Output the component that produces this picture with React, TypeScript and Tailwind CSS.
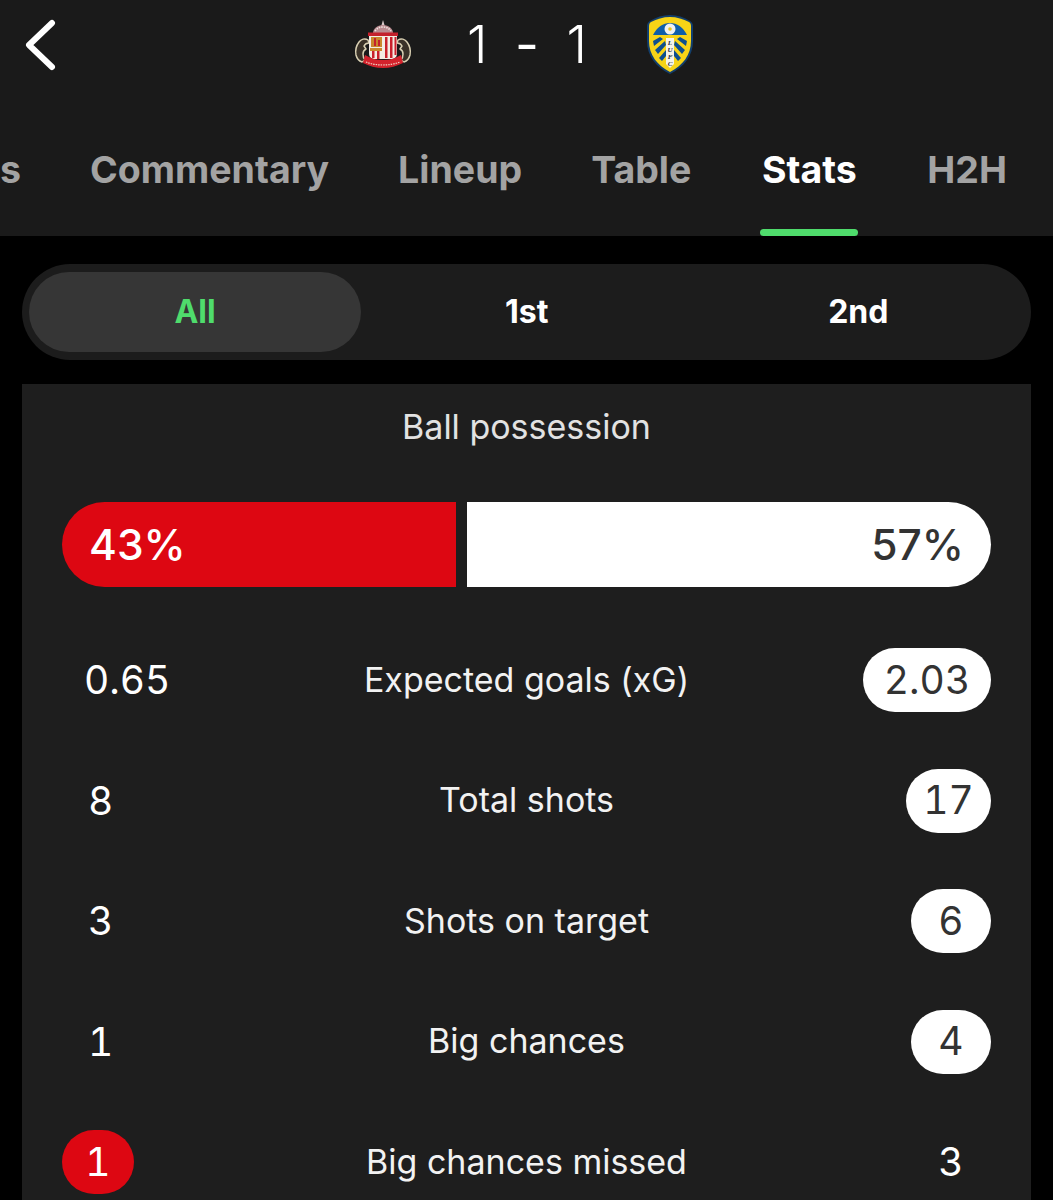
const tabs = ["Events", "Commentary", "Lineup", "Table", "Stats", "H2H"];

const rows = [
  { left: "0.65", label: "Expected goals (xG)", right: "2.03", win: "right", pad: "w-[128px]" },
  { left: "8", label: "Total shots", right: "17", win: "right", pad: "w-[85px]" },
  { left: "3", label: "Shots on target", right: "6", win: "right", pad: "w-[80px]" },
  { left: "1", label: "Big chances", right: "4", win: "right", pad: "w-[80px]" },
  { left: "1", label: "Big chances missed", right: "3", win: "left", pad: "w-[72px]" },
];

function SunderlandCrest() {
  return (
    <svg width="60" height="54" viewBox="0 0 60 54" className="shrink-0">
      <path d="M30 2l1.800 6h-3.600z" fill="#d9c9c9" />
      <path d="M20 15c0-4 4-8 10-8s10 4 10 8z" fill="#b98a8f" />
      <path d="M22 13c2-3 5-4 8-4s6 1 8 4" fill="none" stroke="#efe3e0" strokeWidth="1.600" strokeDasharray="1.500 1" />
      <path d="M15 14.500h30v3.500H15z" fill="#c4202b" />
      <path d="M15 22c-3-2-7-1-9 2-3 4-4 8-3 13 1 4 3 6 6 7l3-2c-1-1-2-3-2-6 0-2 1-4 3-5l-2-3c1-2 3-3 5-3z" fill="#3a3228" stroke="#d8cfb2" strokeWidth="1.500" strokeLinejoin="round" />
      <path d="M45 22c3-2 7-1 9 2 3 4 4 8 3 13-1 4-3 6-6 7l-3-2c1-1 2-3 2-6 0-2-1-4-3-5l2-3c-1-2-3-3-5-3z" fill="#3a3228" stroke="#d8cfb2" strokeWidth="1.500" strokeLinejoin="round" />
      <path d="M16 18h28v17c0 4-2 6-6 6H22c-4 0-6-2-6-6z" fill="#f3ebe2" />
      <path d="M18 19h11v10H18z" fill="#c9872c" />
      <path d="M21 20h2v8h-2zM25 22h2v6h-2z" fill="#c4202b" />
      <path d="M32 19h2.500v21H32zM37 19h2.500v21H37zM41.500 19h2v18h-2z" fill="#c9202b" />
      <path d="M17 30h12v3H17z" fill="#c9872c" />
      <path d="M19 33h2.500v7H19zM24 33h2.500v8H24z" fill="#c9202b" />
      <path d="M12 37c5 3 11 5 18 5s13-2 18-5l2 8c-6 3-13 5-20 5s-14-2-20-5z" fill="#d3222c" />
      <path d="M13 44c5 2 11 3 17 3s12-1 17-3" fill="none" stroke="#f0d4c4" strokeWidth="1.200" strokeDasharray="1.500 1" />
    </svg>
  );
}

function LeedsCrest() {
  return (
    <svg width="48" height="60" viewBox="0 0 48 60" className="shrink-0">
      <path d="M24 0c7 0 14 2 20 6 2 1 3 3 3 5v15c0 15-9 26-23 33C10 52 1 41 1 26V11c0-2 1-4 3-5C10 2 17 0 24 0z" fill="#123f6d" />
      <path d="M24 2c7 0 13 2 19 5 1.500 1 2 2.500 2 4v15c0 14-8 24-21 31C11 50 3 40 3 26V11c0-1.500.5-3 2-4C11 4 17 2 24 2z" fill="#f7d417" />
      <path d="M24 8c7 0 13 4 17 12H7c4-8 10-12 17-12z" fill="#0e5ea8" />
      <circle cx="24" cy="14" r="5.500" fill="#eef1f3" />
      <circle cx="24" cy="14" r="1.800" fill="#e8c520" />
      <path d="M7 26l7-4 3 2-9 7zM9 35l10-9 1 4-8 9zM13 43l7-8v6l-4 5z" fill="#0e4f8e" />
      <path d="M41 26l-7-4-3 2 9 7zM39 35l-10-9-1 4 8 9zM35 43l-7-8v6l4 5z" fill="#0e4f8e" />
      <path d="M20 23h8v26l-4 4-4-4z" fill="#f6f4e8" />
      <text x="24" y="30" textAnchor="middle" fontSize="7" fontStyle="italic" fontWeight="700" fontFamily="Liberation Serif, serif" fill="#1b2a3a">L</text>
      <text x="24" y="37" textAnchor="middle" fontSize="7" fontStyle="italic" fontWeight="700" fontFamily="Liberation Serif, serif" fill="#1b2a3a">U</text>
      <text x="24" y="44" textAnchor="middle" fontSize="7" fontStyle="italic" fontWeight="700" fontFamily="Liberation Serif, serif" fill="#1b2a3a">F</text>
      <text x="24" y="51" textAnchor="middle" fontSize="7" fontStyle="italic" fontWeight="700" fontFamily="Liberation Serif, serif" fill="#1b2a3a">C</text>
    </svg>
  );
}

function Val({ value, tone, pad }: { value: string; tone: "red" | "white"; pad: string }) {
  return (
    <span
      className={`flex h-16 items-center justify-center rounded-full text-[39px] tabular-nums ${pad} ${
        tone === "red" ? "bg-[#dd0712] text-white" : "bg-white text-[#333333]"
      }`}
    >
      {value}
    </span>
  );
}

export default function App() {
  return (
    <div className="h-[1200px] overflow-hidden bg-black font-['Inter',sans-serif] text-white">
      <header className="flex h-[236px] flex-col bg-[#1a1a1a]">
        <div className="flex h-[90px] items-center">
          <svg width="34" height="52" viewBox="0 0 34 52" className="ml-[23px] shrink-0">
            <path d="M29 4L6 26l23 22" fill="none" stroke="white" strokeWidth="6" strokeLinecap="round" strokeLinejoin="round" />
          </svg>
          <div className="ml-[296px] flex items-center">
            <SunderlandCrest />
            <div className="ml-[54px] flex w-[120px] justify-between text-[52px] font-light leading-none text-white">
              <span>1</span>
              <span className="font-normal">-</span>
              <span>1</span>
            </div>
            <div className="ml-[59px]">
              <LeedsCrest />
            </div>
          </div>
        </div>
        <nav className="mt-[52px] flex h-[94px] justify-end gap-[69px] overflow-hidden pr-[46px]">
          {tabs.map((t) => (
            <div key={t} className="flex shrink-0 flex-col items-center">
              <span className={`text-[37.500px] font-bold leading-[56px] ${t === "Stats" ? "text-white" : "text-[#a3a3a3]"}`}>{t}</span>
              {t === "Stats" && <span className="mt-[31px] h-[7px] w-[98px] rounded-full bg-[#4fdc6c]" />}
            </div>
          ))}
        </nav>
      </header>
      <main className="flex flex-col px-[22px] pt-[28px]">
        <div className="flex h-24 items-center rounded-full bg-[#1c1c1c] px-[7px]">
          <div className="flex h-[80px] w-[332px] items-center justify-center rounded-full bg-[#363636] text-[32px] font-bold text-[#4fdc6c]">All</div>
          <div className="flex-1 text-center text-[32px] font-bold">1st</div>
          <div className="flex-1 text-center text-[32px] font-bold">2nd</div>
        </div>
        <section className="mt-6 flex flex-col bg-[#1e1e1e] px-10 pb-2 pt-6">
          <div className="text-center text-[34px] leading-[38px] text-[#e2e2e2]">Ball possession</div>
          <div className="mt-[56px] flex h-[85px] gap-[11px]">
            <div className="flex w-[394px] items-center rounded-l-full bg-[#dd0712] pl-[27px] text-[42.500px] font-medium">43%</div>
            <div className="flex flex-1 items-center justify-end rounded-r-full bg-white pr-[27px] text-[42.500px] font-medium text-[#333333]">57%</div>
          </div>
          <div className="mt-[61px] flex flex-col gap-[56.500px]">
            {rows.map((r) => (
              <div key={r.label} className="grid h-16 grid-cols-[1fr_auto_1fr] items-center">
                <div className="flex justify-start">
                  {r.win === "left" ? (
                    <Val value={r.left} tone="red" pad={r.pad} />
                  ) : (
                    <span className={`text-[39px] leading-[64px] tabular-nums ${r.left.length > 1 ? "pl-[22px]" : "pl-[26px]"}`}>{r.left}</span>
                  )}
                </div>
                <div className="-mt-0.5 text-center text-[34px] text-[#f2f2f2]">{r.label}</div>
                <div className="flex justify-end">
                  {r.win === "right" ? (
                    <Val value={r.right} tone="white" pad={r.pad} />
                  ) : (
                    <span className="w-20 text-center text-[39px] leading-[64px] tabular-nums">{r.right}</span>
                  )}
                </div>
              </div>
            ))}
          </div>
        </section>
      </main>
    </div>
  );
}
